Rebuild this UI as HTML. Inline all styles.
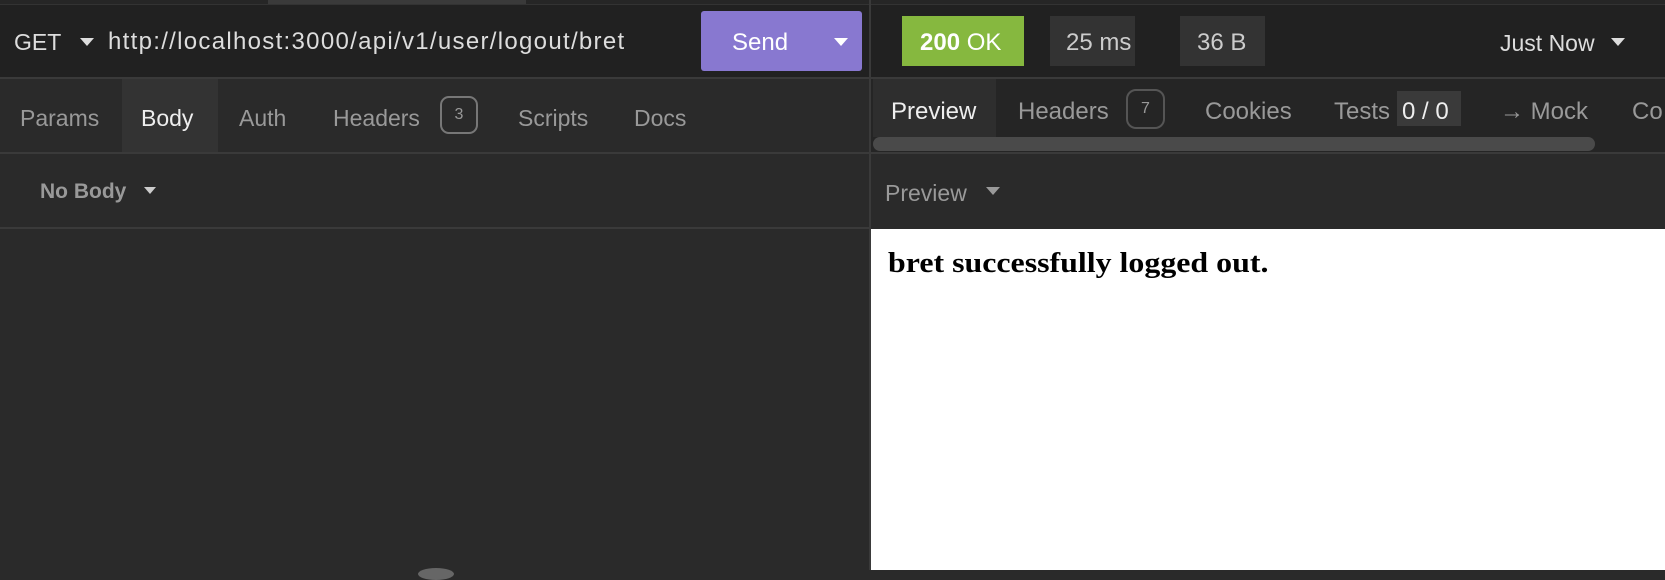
<!DOCTYPE html>
<html><head><meta charset="utf-8"><style>
*{margin:0;padding:0;box-sizing:border-box}
body{width:1665px;height:570px;overflow:hidden;background:#2a2a2a;font-family:"Liberation Sans",sans-serif;color:#ccc;position:relative}
.a{position:absolute;white-space:nowrap}
.tri{display:inline-block;width:0;height:0;border-left:7px solid transparent;border-right:7px solid transparent;border-top:8px solid #ddd;vertical-align:top}
</style></head><body>
<div class="a" style="left:0;top:0;width:1665px;height:78px;background:#212121"></div>
<div class="a" style="left:0;top:0;width:1665px;height:5px;background:#262626;border-bottom:1px solid #333"></div>
<div class="a" style="left:268px;top:0;width:258px;height:4px;background:#3a3a3a"></div>
<div class="a" style="left:0;top:77px;width:1665px;height:2px;background:#3a3a3a"></div>
<div class="a" style="left:0;top:152px;width:1665px;height:2px;background:#3a3a3a"></div>
<div class="a" style="left:0;top:227px;width:870px;height:2px;background:#3a3a3a"></div>
<div class="a" style="left:869px;top:0;width:2px;height:570px;background:#3a3a3a"></div>

<div class="a" style="left:14px;top:29px;font-size:23px;color:#ddd">GET</div>
<div class="a" style="left:80px;top:38px"><span class="tri"></span></div>
<div class="a" style="left:108px;top:28px;font-size:24px;color:#ddd;letter-spacing:1.3px">http://localhost:3000/api/v1/user/logout/bret</div>
<div class="a" style="left:701px;top:11px;width:161px;height:60px;background:#8878d0;border-radius:3px"></div>
<div class="a" style="left:732px;top:29px;font-size:24px;color:#fff">Send</div>
<div class="a" style="left:834px;top:38px"><span class="tri" style="border-top-color:#fff"></span></div>

<div class="a" style="left:122px;top:79px;width:96px;height:73px;background:#333"></div>
<div class="a" style="left:20px;top:105px;font-size:23px;color:#999">Params</div>
<div class="a" style="left:141px;top:105px;font-size:23px;color:#eee">Body</div>
<div class="a" style="left:239px;top:105px;font-size:23px;color:#999">Auth</div>
<div class="a" style="left:333px;top:105px;font-size:23px;color:#999">Headers</div>
<div class="a" style="left:440px;top:96px;width:38px;height:38px;border:2px solid #777;border-radius:9px;font-size:16px;color:#999;text-align:center;line-height:34px">3</div>
<div class="a" style="left:518px;top:105px;font-size:23px;color:#999">Scripts</div>
<div class="a" style="left:634px;top:105px;font-size:23px;color:#999">Docs</div>
<div class="a" style="left:40px;top:180px;font-size:21px;font-weight:bold;color:#999">No Body</div>
<div class="a" style="left:144px;top:187px"><span class="tri" style="border-top-color:#ccc;border-width:7px 6px 0"></span></div>

<div class="a" style="left:902px;top:16px;width:122px;height:50px;background:#86b83f"></div>
<div class="a" style="left:920px;top:29px;font-size:24px;color:#fff"><b>200</b> OK</div>
<div class="a" style="left:1050px;top:16px;width:85px;height:50px;background:#333"></div>
<div class="a" style="left:1066px;top:29px;font-size:24px;color:#ccc">25 ms</div>
<div class="a" style="left:1180px;top:16px;width:85px;height:50px;background:#333"></div>
<div class="a" style="left:1197px;top:29px;font-size:24px;color:#ccc">36 B</div>
<div class="a" style="left:1500px;top:30px;font-size:23px;color:#ddd">Just Now</div>
<div class="a" style="left:1611px;top:38px"><span class="tri" style="border-width:8px 7px 0"></span></div>

<div class="a" style="left:871px;top:79px;width:794px;height:73px;background:#252525"></div>
<div class="a" style="left:873px;top:79px;width:123px;height:58px;background:#2e2e2e"></div>
<div class="a" style="left:891px;top:98px;font-size:24px;color:#eee">Preview</div>
<div class="a" style="left:1018px;top:98px;font-size:24px;color:#999">Headers</div>
<div class="a" style="left:1126px;top:89px;width:39px;height:40px;border:2px solid #555;border-radius:10px;font-size:16px;color:#999;text-align:center;line-height:36px">7</div>
<div class="a" style="left:1205px;top:98px;font-size:24px;color:#999">Cookies</div>
<div class="a" style="left:1334px;top:98px;font-size:24px;color:#999">Tests</div>
<div class="a" style="left:1397px;top:91px;width:64px;height:35px;background:#3a3a3a"></div>
<div class="a" style="left:1402px;top:98px;font-size:24px;color:#eee">0 / 0</div>
<div class="a" style="left:1500px;top:98px;font-size:24px;color:#999">→ Mock</div>
<div class="a" style="left:1632px;top:98px;font-size:24px;color:#999">Co</div>
<div class="a" style="left:873px;top:137px;width:722px;height:14px;background:#4a4a4a;border-radius:7px"></div>

<div class="a" style="left:885px;top:180px;font-size:23px;color:#999">Preview</div>
<div class="a" style="left:986px;top:187px"><span class="tri" style="border-top-color:#999;border-width:8px 7px 0"></span></div>

<div class="a" style="left:871px;top:229px;width:794px;height:341px;background:#fff"></div>
<div class="a" style="left:888px;top:247px;font-family:'Liberation Serif',serif;font-weight:bold;font-size:29px;color:#000;transform:scaleX(1.1);transform-origin:0 0">bret successfully logged out.</div>
<div class="a" style="left:418px;top:568px;width:36px;height:12px;background:#666;border-radius:50%"></div>
</body></html>
